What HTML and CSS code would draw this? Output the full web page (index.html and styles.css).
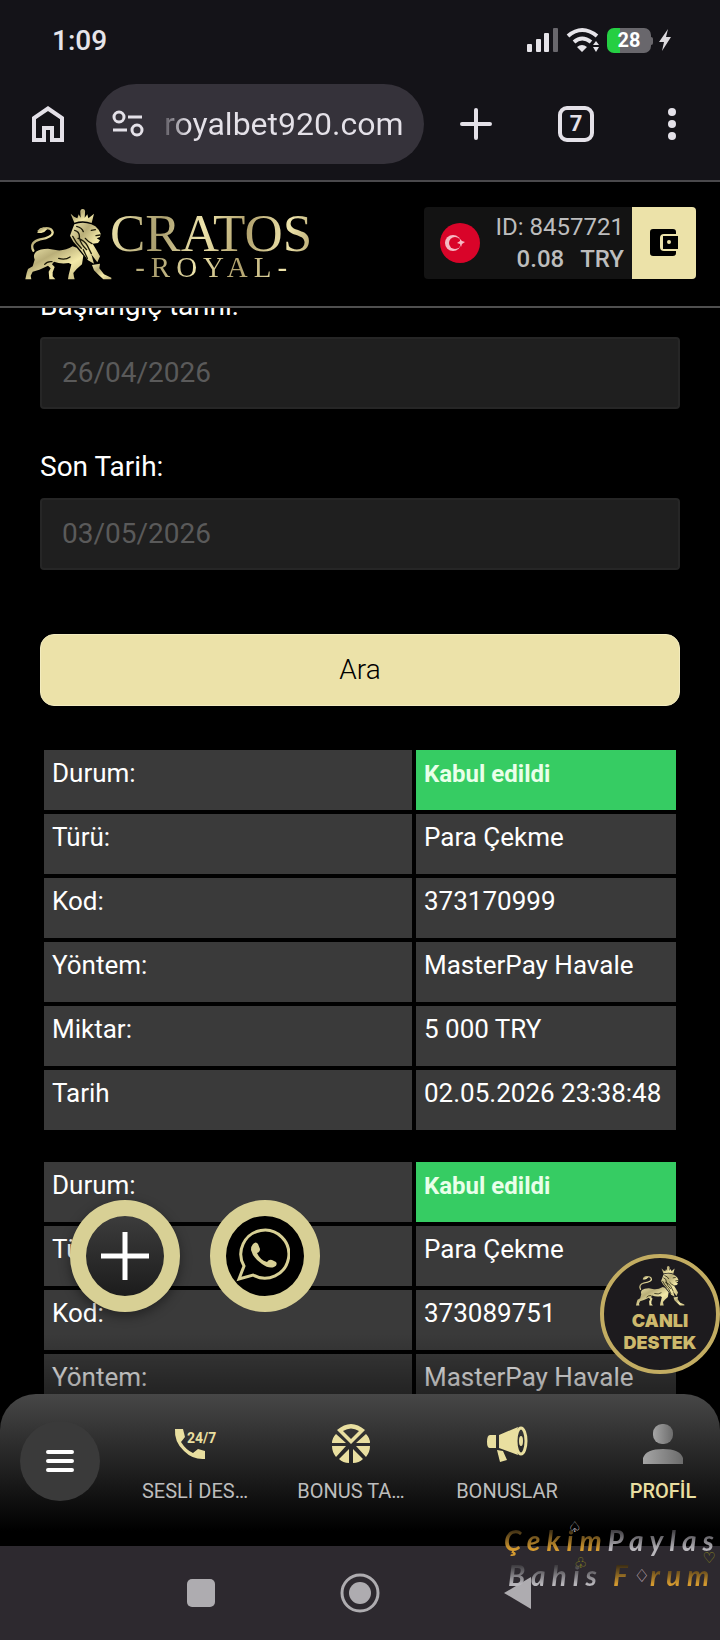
FILE: index.html
```
<!DOCTYPE html>
<html lang="tr">
<head>
	<title>Cratos Royal</title>
	<meta charset="utf-8">
	<meta name="viewport" content="width=device-width, initial-scale=1">
	<link rel="stylesheet" href="styles.css">
</head>
<body>
	<svg class="defs" width="0" height="0">
		<linearGradient id="gold" x1="0" y1="0" x2="1" y2="1">
			<stop offset="0" stop-color="#f3ebb2"/>
			<stop offset="0.35" stop-color="#b9ae78"/>
			<stop offset="0.65" stop-color="#f3e9a8"/>
			<stop offset="1" stop-color="#c2b67c"/>
		</linearGradient>
		<symbol id="lion" viewBox="0 0 288 252">
			<path fill="none" stroke="url(#gold)" stroke-width="7" stroke-linecap="round" d="M40 149C30 130 42 120 60 115C82 111 98 106 98 95C97 84 86 79 70 83"/>
			<path fill="url(#gold)" d="M54 88Q60 78 74 80L82 84Q74 95 64 96L52 96Z"/>
			<path fill="url(#gold)" d="M152 38L162 47L172 52L176 40L182 50L181 35Q180 25 188 24Q197 25 195 35L194 50L202 40L205 52L213 46L222 38L215 66Q190 56 163 65Z"/>
			<path fill="url(#gold)" d="M163 70Q188 60 214 70L226 76L236 86L242 98L240 108L230 112L240 118L234 126L218 128L228 145L240 166L232 184L214 160L222 188L204 178L190 158L174 138L160 122L150 104L156 88Z"/>
			<path fill="url(#gold)" d="M48 152Q60 143 84 143L112 148Q136 150 158 136L170 140L190 164L186 190L170 204L160 216L162 228L164 235H144L146 222L150 206L154 190L146 186Q122 190 102 182L96 190L104 198L98 214L98 226L106 235H88L86 212L92 202L84 194L76 198L58 206L38 212L32 224L34 235H16L20 216L24 204L38 196L44 176Q38 162 48 152Z"/>
			<path fill="url(#gold)" d="M216 192L240 188L238 202L252 220L274 230V235H250L236 222L222 208Z"/>
			<path fill="none" stroke="#1b1908" stroke-width="4" stroke-linecap="round" d="M170 76Q186 80 190 92M164 88Q180 92 178 110Q182 130 200 146M174 112Q194 118 202 134L214 158M196 112Q206 124 216 128M214 88L226 86M228 104L240 102M158 106Q166 124 184 142M190 146L202 172M116 172Q136 178 150 168M96 182Q82 180 74 190"/>
		</symbol>
	</svg>

	<div class="statusbar">
		<span>1:09</span>
		<div class="status-icons">
			<svg width="32" height="26" viewBox="0 0 32 26" fill="#e6e4e9">
				<rect x="0" y="17" width="5" height="8" rx="1"/>
				<rect x="9" y="12" width="5" height="13" rx="1"/>
				<rect x="17" y="6" width="5" height="19" rx="1"/>
				<rect x="26" y="1" width="5" height="24" rx="1" fill="#69676c"/>
			</svg>
			<svg width="34" height="26" viewBox="0 0 34 26">
				<path fill="none" stroke="#e6e4e9" stroke-width="4" d="M2 9Q16 -3 31 9M8 15Q16 8 25 15"/>
				<path fill="#e6e4e9" d="M11 20Q16 16 21 20L16 25ZM27 18L30 14L33 18ZM27 20H33L30 25Z"/>
			</svg>
			<div class="battery">28</div>
			<svg width="14" height="24" viewBox="0 0 14 24" fill="#dcdade"><path d="M10 1L1 14H6L4 23L13 9H8Z"/></svg>
		</div>
	</div>

	<div class="browserbar">
		<button class="icon-btn" aria-label="Home">
			<svg width="32" height="36" viewBox="0 0 32 36" fill="none" stroke="#e4e1e8" stroke-width="4"><path d="M2 34V12L16 2.500L30 12V34H20V22H12V34Z"/></svg>
		</button>
		<button class="url">
			<svg width="32" height="28" viewBox="0 0 32 28" fill="none" stroke="#e4e1e8" stroke-width="3">
				<circle cx="7" cy="7" r="5"/><path d="M16 7H30M1 20H15"/><circle cx="25" cy="20" r="5"/>
			</svg>
			<span class="url-text">royalbet920.com</span>
		</button>
		<button class="new-tab" aria-label="New tab">
			<svg width="32" height="32" viewBox="0 0 32 32" stroke="#e4e1e8" stroke-width="4" stroke-linecap="round"><path d="M16 2V30M2 16H30"/></svg>
		</button>
		<button class="tabs">7</button>
		<button class="icon-btn" aria-label="Menu">
			<svg width="8" height="32" viewBox="0 0 8 32" fill="#e4e1e8"><circle cx="4" cy="4" r="4"/><circle cx="4" cy="16" r="4"/><circle cx="4" cy="28" r="4"/></svg>
		</button>
	</div>

	<header class="header">
		<a class="logo" href="#">
			<svg class="logo-lion" aria-hidden="true"><use href="#lion"/></svg>
			<span class="logo-text">
				<span class="logo-top">CRATOS</span>
				<span class="logo-sub">-ROYAL-</span>
			</span>
		</a>
		<div class="account">
			<svg width="40" height="40" viewBox="0 0 40 40">
				<circle cx="20" cy="20" r="20" fill="#d90429"/>
				<circle cx="13" cy="20" r="8" fill="#f6b9c3"/>
				<circle cx="15" cy="20" r="6" fill="#d90429"/>
				<path fill="#f6b9c3" d="M17 20L20 18L20 16L22 18L25 19L22 21L21 24L20 21Z"/>
			</svg>
			<div class="account-text">
				<span>ID: 8457721</span>
				<span class="balance"><span>0.08</span><span>TRY</span></span>
			</div>
			<button class="wallet" aria-label="Cüzdan">
				<svg width="28" height="28" viewBox="0 0 28 28">
					<path d="M3 0H23Q26 0 26 3V5H14Q10 5 10 9V18Q10 22 14 22H26V24Q26 27 23 27H3Q0 27 0 24V3Q0 0 3 0Z"/>
					<path d="M13 7H28V20H13Z"/><circle cx="19" cy="13" r="2" fill="#ece2a9"/>
				</svg>
			</button>
		</div>
	</header>

	<main class="page">
		<form class="search">
			<label for="start">Başlangıç tarihi:</label>
			<input id="start" type="text" value="26/04/2026">
			<label for="end">Son Tarih:</label>
			<input id="end" type="text" value="03/05/2026">
			<button class="submit" type="button">Ara</button>
		</form>

		<table class="record">
			<tr><td>Durum:</td><td class="ok">Kabul edildi</td></tr>
			<tr><td>Türü:</td><td>Para Çekme</td></tr>
			<tr><td>Kod:</td><td>373170999</td></tr>
			<tr><td>Yöntem:</td><td>MasterPay Havale</td></tr>
			<tr><td>Miktar:</td><td>5 000 TRY</td></tr>
			<tr><td>Tarih</td><td>02.05.2026 23:38:48</td></tr>
		</table>

		<table class="record">
			<tr><td>Durum:</td><td class="ok">Kabul edildi</td></tr>
			<tr><td>Türü:</td><td>Para Çekme</td></tr>
			<tr><td>Kod:</td><td>373089751</td></tr>
			<tr><td>Yöntem:</td><td>MasterPay Havale</td></tr>
		</table>

		<div class="fade"></div>

		<div class="floats">
			<button class="float plus" aria-label="Ekle">
				<svg width="50" height="50" viewBox="0 0 50 50" stroke="#fff" stroke-width="5"><path d="M25 1V49M1 25H49"/></svg>
			</button>
			<a class="float whatsapp" href="#" aria-label="WhatsApp">
				<svg width="54" height="54" viewBox="0 0 54 54" fill="none" stroke="#d8d095" stroke-width="3">
					<path d="M3 51L8 38A24 24 0 1 1 17 47Z"/>
					<path fill="#d8d095" stroke="none" d="M17 16Q20 13 22 16L24 21Q24 24 21 25Q24 32 31 34Q33 31 36 32L40 34Q42 37 38 39Q33 41 26 36Q17 30 15 22Q15 18 17 16Z"/>
				</svg>
			</a>
		</div>

		<a class="support" href="#">
			<svg class="support-lion" aria-hidden="true"><use href="#lion"/></svg>
			<span>CANLI</span>
			<span>DESTEK</span>
		</a>
	</main>

	<nav class="bottom-nav">
		<button class="menu" aria-label="Menü">
			<svg width="28" height="22" viewBox="0 0 28 22" stroke="#fff" stroke-width="4" stroke-linecap="round"><path d="M2 2H26M2 11H26M2 20H26"/></svg>
		</button>
		<div class="nav-items">
			<a class="nav-item" href="#">
				<svg width="42" height="40" viewBox="0 0 42 40" fill="#e9dfa0">
					<path d="M1 5H9L11 13L7 18Q12 26 19 29L24 25L31 27V35Q19 36 10 27Q0 18 1 5Z"/>
					<text class="all-day" x="13" y="19">24/7</text>
				</svg>
				<span>SESLİ DES…</span>
			</a>
			<a class="nav-item" href="#">
				<svg width="40" height="40" viewBox="0 0 40 40" fill="#e9dfa0">
					<path fill-rule="evenodd" d="M6 6Q20 -6 34 6L20 20ZM12 7L20 15L28 7Q20 2 12 7Z"/>
					<path d="M5 10L15 19H1Q1 14 5 10ZM35 10Q39 14 39 19H25ZM1 22H15L5 33Q1 28 1 22ZM25 22H39Q39 28 35 33ZM18 25V39Q12 39 8 35ZM22 25L32 35Q28 39 22 39Z"/>
				</svg>
				<span>BONUS TA…</span>
			</a>
			<a class="nav-item" href="#">
				<svg width="42" height="40" viewBox="0 0 42 40" fill="#e9dfa0">
					<path d="M4 11H10V24H4Q1 24 1 18Q1 11 4 11ZM13 11L32 3Q28 17 32 31L13 24ZM11 26L17 27L21 36L14 38Z"/>
					<ellipse cx="35" cy="17" rx="5" ry="13" fill="none" stroke="#e9dfa0" stroke-width="3"/>
					<ellipse cx="35" cy="17" rx="2" ry="5"/>
				</svg>
				<span>BONUSLAR</span>
			</a>
			<a class="nav-item active" href="#">
				<svg width="40" height="40" viewBox="0 0 40 40">
					<linearGradient id="grey"><stop stop-color="#a5a5a5"/><stop offset="1" stop-color="#6c6c6c"/></linearGradient>
					<g fill="url(#grey)"><rect x="10" y="0" width="20" height="20" rx="9"/><path d="M0 40V34Q3 25 20 25Q37 25 40 34V40Z"/></g>
				</svg>
				<span>PROFİL</span>
			</a>
		</div>
	</nav>

	<div class="systembar">
		<svg width="30" height="30" viewBox="0 0 30 30"><rect x="1" y="1" width="28" height="28" rx="5" fill="#aeacb0"/></svg>
		<svg width="40" height="40" viewBox="0 0 40 40"><circle cx="20" cy="20" r="18" fill="none" stroke="#aeacb0" stroke-width="3"/><circle cx="20" cy="20" r="11" fill="#aeacb0"/></svg>
		<svg width="30" height="34" viewBox="0 0 30 34"><path fill="#aeacb0" d="M0 17L27 1V33Z"/></svg>
		<div class="watermark">
			<div><span class="amber">Çekim</span><span class="silver">Paylas</span></div>
			<div><span class="silver word">Bahis</span><span class="amber">F</span><span class="suit">♢</span><span class="amber">rum</span></div>
			<span class="mark spade">♤</span>
			<span class="mark club">♧</span>
			<span class="mark heart">♡</span>
		</div>
	</div>
</body>
</html>
```

FILE: styles.css
```
*{
	box-sizing: border-box;
}
body{
	margin: 0;
	height: 100vh;
	display: flex;
	flex-direction: column;
	background: #000;
	color: #fff;
	font-family: Roboto, sans-serif;
	font-size: 26px;
	overflow: hidden;
}
button, input{
	font-family: inherit;
	border: none;
	padding: 0;
	background: none;
	color: inherit;
}
a{
	color: inherit;
	text-decoration: none;
}
svg{
	display: block;
	flex: none;
}
.defs{
	position: absolute;
}

/* phone status bar */
.statusbar{
	display: flex;
	justify-content: space-between;
	align-items: center;
	height: 80px;
	padding: 0 48px 0 52px;
	background: #141318;
	color: #e6e4e9;
	font-size: 28px;
	font-weight: 500;
}
.status-icons{
	display: flex;
	align-items: center;
	gap: 7px;
}
.battery{
	position: relative;
	width: 44px;
	height: 25px;
	border-radius: 7px;
	background: linear-gradient(90deg, #25cf43 13px, #69676c 13px);
	color: #fff;
	font-size: 20px;
	line-height: 25px;
	font-weight: 700;
	text-align: center;
}
.battery::after{
	content: "";
	position: absolute;
	left: 44px;
	top: 9px;
	width: 2px;
	height: 8px;
	border-radius: 0 2px 2px 0;
	background: #69676c;
}

/* browser bar */
.browserbar{
	display: flex;
	align-items: center;
	gap: 32px;
	height: 102px;
	padding: 0 44px 12px 32px;
	background: #141318;
	border-bottom: 2px solid #4a494c;
}
.url{
	display: flex;
	flex: 1;
	align-items: center;
	gap: 20px;
	height: 80px;
	padding: 0 16px;
	border-radius: 40px;
	background: #35323a;
	font-size: 32px;
}
.url-text{
	background: linear-gradient(90deg, #5c5961, #e4e1e8 24px);
	-webkit-background-clip: text;
	background-clip: text;
	color: transparent;
}
.new-tab{
	margin-left: 4px;
}
.tabs{
	width: 36px;
	height: 36px;
	margin: 0 42px 0 34px;
	border: 4px solid #e4e1e8;
	border-radius: 9px;
	color: #e4e1e8;
	font-size: 22px;
	line-height: 28px;
	font-weight: 700;
}

/* site header */
.header{
	display: flex;
	justify-content: space-between;
	align-items: center;
	height: 126px;
	padding: 0 24px 2px 20px;
	border-bottom: 2px solid #4f4f4f;
}
.logo{
	display: flex;
	align-items: center;
}
.logo-lion{
	width: 96px;
	height: 84px;
}
.logo-text{
	display: flex;
	flex-direction: column;
	align-items: center;
	margin-left: -6px;
	padding-top: 4px;
	font-family: "Liberation Serif", serif;
	background: linear-gradient(100deg, #f0e7ae, #a89c6c 25%, #efe5ac 45%, #b0a06c 65%, #efe5ac 85%, #b0a06c);
	-webkit-background-clip: text;
	background-clip: text;
	color: transparent;
}
.logo-top{
	font-size: 53px;
	line-height: 44px;
}
.logo-sub{
	padding-left: 6px;
	font-size: 29px;
	line-height: 24px;
	letter-spacing: 6px;
}
.account{
	display: flex;
	align-items: center;
	height: 72px;
	padding-left: 16px;
	border-radius: 4px;
	background: #131313;
	overflow: hidden;
}
.account-text{
	display: flex;
	flex-direction: column;
	align-items: flex-end;
	padding: 0 8px 0 16px;
	color: #bdbdbd;
	font-size: 24px;
	line-height: 32px;
}
.balance{
	display: flex;
	gap: 16px;
	font-weight: 500;
}
.wallet{
	display: flex;
	align-items: center;
	justify-content: center;
	width: 64px;
	height: 72px;
	background: #ece2a9;
}

/* scrolled content */
.page{
	position: relative;
	flex: 1;
	min-height: 0;
	padding: 0 40px;
	overflow: hidden;
}
.search{
	display: flex;
	flex-direction: column;
	margin-top: -19px;
}
.search label{
	margin-bottom: 15px;
	font-size: 28px;
	line-height: 33px;
}
.search input{
	height: 72px;
	margin-bottom: 41px;
	padding: 0 20px 2px;
	border: 2px solid #262626;
	border-radius: 4px;
	background: #1f1f1f;
	color: #5a5a5a;
	font-size: 28px;
}
.submit{
	height: 72px;
	margin: 23px 0 40px;
	padding-bottom: 2px;
	border: 1px solid #f3ecc0;
	border-radius: 14px;
	background: #ece2a9;
	color: #000;
	font-size: 28px;
	font-weight: 300;
}
.record{
	width: 100%;
	margin-bottom: 24px;
	table-layout: fixed;
	border-spacing: 4px;
}
.record td{
	height: 60px;
	padding: 8px;
	background: #3a3a3a;
	line-height: 30px;
	vertical-align: top;
}
.record td:last-child{
	width: 260px;
}
.record .ok{
	background: #36cc63;
	color: #e9ffe9;
	font-size: 24px;
	line-height: 32px;
	font-weight: 700;
}
.fade{
	position: absolute;
	left: 0;
	right: 0;
	bottom: 0;
	height: 60px;
	background: linear-gradient(rgba(0,0,0,0), rgba(0,0,0,0.400));
}

/* floating buttons */
.floats{
	position: absolute;
	left: 70px;
	bottom: 82px;
	display: flex;
	gap: 30px;
}
.float{
	display: flex;
	align-items: center;
	justify-content: center;
	width: 110px;
	height: 112px;
	border: 16px solid #d8d095;
	border-radius: 50%;
}
.plus{
	background: linear-gradient(#3c3c3c, #1c1c1c);
	box-shadow: 0 4px 12px rgba(0,0,0,0.400);
}
.whatsapp{
	padding: 0 4px 2px 0;
	background: #000;
}
.support{
	position: absolute;
	right: 0;
	bottom: 20px;
	display: flex;
	flex-direction: column;
	align-items: center;
	width: 120px;
	height: 120px;
	padding-top: 2px;
	border: 4px solid #c3ad62;
	border-radius: 50%;
	background: #1d1b1e;
	color: #cdb96c;
	font-family: Inter, sans-serif;
	font-size: 18px;
	line-height: 22px;
	font-weight: 900;
}
.support-lion{
	width: 54px;
	height: 50px;
}

/* bottom navigation */
.bottom-nav{
	display: flex;
	height: 152px;
	padding-left: 20px;
	border-radius: 36px 36px 0 0;
	background: linear-gradient(#474747, #000 90%);
	overflow: hidden;
}
.menu{
	display: flex;
	flex: none;
	align-items: center;
	justify-content: center;
	width: 80px;
	height: 80px;
	margin: 27px 17px 0 0;
	border-radius: 50%;
	background: #3a3a3a;
}
.nav-items{
	display: flex;
}
.nav-item{
	display: flex;
	flex: none;
	flex-direction: column;
	align-items: center;
	gap: 14px;
	width: 156px;
	padding-top: 30px;
	color: #bdbdbd;
	font-size: 20px;
	line-height: 26px;
}
.nav-item svg{
	overflow: visible;
}
.nav-item.active{
	color: #e9dfa0;
	font-weight: 500;
}
.all-day{
	font-size: 14px;
	font-weight: 700;
}

/* phone buttons */
.systembar{
	position: relative;
	display: flex;
	align-items: center;
	justify-content: center;
	gap: 124px;
	height: 94px;
	background: #2d292f;
}
.watermark{
	position: absolute;
	right: 0;
	top: -23px;
	width: 216px;
	font-family: Lato, sans-serif;
	font-size: 28px;
	line-height: 35px;
	font-style: italic;
	font-weight: 700;
	letter-spacing: 6px;
	white-space: nowrap;
}
.watermark div{
	display: flex;
}
.watermark div + div{
	padding-left: 4px;
}
.amber, .silver{
	-webkit-background-clip: text;
	background-clip: text;
	color: transparent;
}
.amber{
	background-image: linear-gradient(#3a2c14 20%, #d49a30 75%);
}
.silver{
	background-image: linear-gradient(#3c3a3e 20%, #b9b7bc 75%);
}
.word{
	padding-right: 10px;
}
.suit, .mark{
	font-family: "DejaVu Sans", sans-serif;
	font-style: normal;
	font-weight: 400;
	letter-spacing: 0;
}
.suit{
	color: #dcc4cc;
	font-size: 18px;
}
.mark{
	position: absolute;
	font-size: 15px;
	line-height: 15px;
}
.spade{
	left: 64px;
	top: -3px;
	color: #d5cfd5;
}
.club{
	left: 70px;
	top: 33px;
	color: #8f8a20;
}
.heart{
	right: 4px;
	top: 28px;
	color: #8f8a20;
}
```
